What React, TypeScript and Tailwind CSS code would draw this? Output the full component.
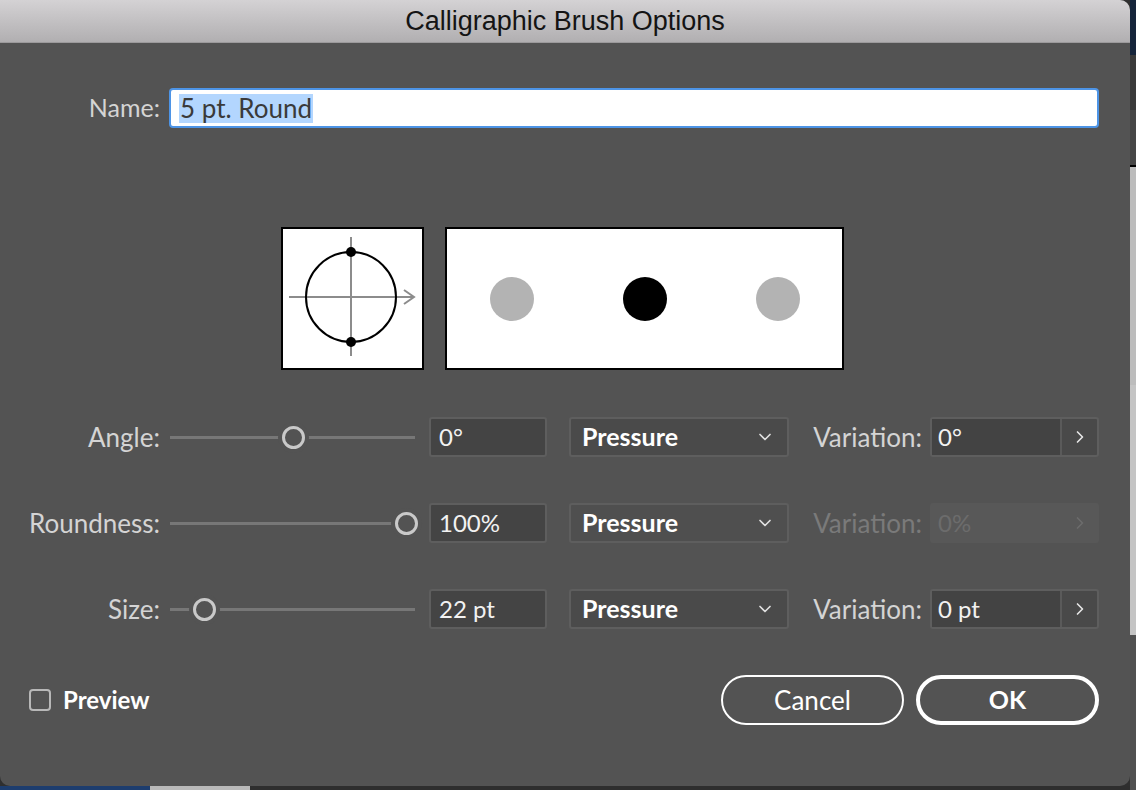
import { ChevronDown, ChevronRight } from 'lucide-react';

const rows = [
  { label: 'Angle:', thumb: 123, value: '0°', variation: '0°', disabled: false, dropBg: 'bg-[#4a4a4a]' },
  { label: 'Roundness:', thumb: 236, value: '100%', variation: '0%', disabled: true, dropBg: 'bg-[#4f4f4f]' },
  { label: 'Size:', thumb: 34, value: '22 pt', variation: '0 pt', disabled: false, dropBg: 'bg-[#4a4a4a]' },
];

function Slider({ thumb }: { thumb: number }) {
  return (
    <div className="relative ml-[10px] flex h-[40px] w-[247px] items-center">
      <div className="h-[3px] w-[245px] bg-[#777777]" />
      <div
        className="absolute top-[9px] h-[23px] w-[23px] rounded-full border-[3px] border-[#c9c9c9] bg-[#535353] shadow-[0_0_0_4px_#535353]"
        style={{ left: thumb - 11 }}
      />
    </div>
  );
}

function BrushTip() {
  return (
    <div className="h-[143px] w-[143px] border-2 border-black bg-white">
      <svg width="139" height="139" viewBox="0 0 139 139">
        <g stroke="#8c8c8c" strokeWidth="2" fill="none">
          <line x1="6" y1="68" x2="131" y2="68" />
          <polyline points="121,61 131,68 121,75" />
          <line x1="68" y1="8" x2="68" y2="127" />
        </g>
        <circle cx="68" cy="68" r="45" stroke="#000" strokeWidth="2" fill="none" />
        <circle cx="68" cy="23" r="5" fill="#000" />
        <circle cx="68" cy="113" r="5" fill="#000" />
      </svg>
    </div>
  );
}

export default function App() {
  return (
    <div className="flex h-[790px] w-[1136px] overflow-hidden bg-[#2f2f2f] font-['Lato',sans-serif]">
      <div className="flex w-[1130px] flex-col">
        <div className="flex h-[786px] flex-col overflow-hidden rounded-tr-[10px] rounded-b-[10px] bg-[#535353]">
          {/* Title bar */}
          <div className="flex h-[43px] items-center justify-center border-b border-[#9c9a9c] bg-linear-to-b from-[#d4d2d4] to-[#b1afb1] font-['Liberation_Sans',sans-serif] text-[27px] text-[#141414]">
            Calligraphic Brush Options
          </div>

          {/* Name */}
          <div className="mt-[45px] flex h-[40px] items-center">
            <div className="w-[160px] text-right text-[25px] text-[#d4d4d4]">Name:</div>
            <div className="ml-[9px] flex h-[40px] w-[930px] items-center rounded-[4px] border-2 border-[#4d94e6] bg-white pl-[8px] text-[26px] text-[#3a3a3a]">
              <span className="bg-[#b3d6fe] px-[1px] leading-[29px]">5 pt. Round</span>
            </div>
          </div>

          {/* Preview */}
          <div className="mt-[99px] ml-[281px] flex gap-[21px]">
            <BrushTip />
            <div className="flex h-[143px] w-[399px] items-center justify-center gap-[89px] border-2 border-black bg-white">
              <div className="h-[44px] w-[44px] rounded-full bg-[#b3b3b3]" />
              <div className="h-[44px] w-[44px] rounded-full bg-black" />
              <div className="h-[44px] w-[44px] rounded-full bg-[#b3b3b3]" />
            </div>
          </div>

          {/* Controls */}
          <div className="mt-[47px] flex flex-col gap-[46px]">
            {rows.map((r) => (
              <div key={r.label} className="flex h-[40px] items-center text-[24px]">
                <div className="w-[160px] text-right text-[26px] text-[#d4d4d4]">{r.label}</div>
                <Slider thumb={r.thumb} />
                <div className="ml-[12px] flex h-[40px] w-[118px] items-center rounded-[3px] border-2 border-[#5e5e5e] bg-[#444444] pl-[8px] text-[#f2f2f2]">
                  {r.value}
                </div>
                <div
                  className={`ml-[22px] flex h-[40px] w-[220px] items-center justify-between rounded-[3px] border-2 border-[#5e5e5e] ${r.dropBg} pl-[11px] pr-[12px] text-[25px] font-bold text-white`}
                >
                  Pressure
                  <ChevronDown size={20} strokeWidth={2} className="text-[#e0e0e0]" />
                </div>
                <div className={`w-[133px] text-right text-[26px] ${r.disabled ? 'text-[#7a7a7a]' : 'text-[#d4d4d4]'}`}>
                  Variation:
                </div>
                {r.disabled ? (
                  <div className="ml-[8px] flex h-[40px] w-[169px] items-center rounded-[3px] bg-[#585858] pl-[8px] text-[#6c6c6c]">
                    <span className="flex-1">{r.variation}</span>
                    <ChevronRight size={20} strokeWidth={2} className="mr-[9px] text-[#6c6c6c]" />
                  </div>
                ) : (
                  <div className="ml-[8px] flex h-[40px] w-[169px] rounded-[3px] border-2 border-[#5e5e5e] bg-[#494949]">
                    <div className="flex w-[130px] items-center border-r-2 border-[#5a5a5a] bg-[#434343] pl-[6px] text-[#f2f2f2]">
                      {r.variation}
                    </div>
                    <div className="flex flex-1 items-center justify-center">
                      <ChevronRight size={20} strokeWidth={2} className="text-[#e6e6e6]" />
                    </div>
                  </div>
                )}
              </div>
            ))}
          </div>

          {/* Footer */}
          <div className="mt-[46px] flex h-[50px] items-center pr-[31px] pl-[29px] text-[24px] text-white">
            <div className="h-[22px] w-[22px] rounded-[4px] border-2 border-[#b8b8b8]" />
            <span className="ml-[12px] font-bold">Preview</span>
            <div className="ml-auto flex gap-[12px]">
              <div className="flex h-[50px] w-[183px] items-center justify-center rounded-full border-2 border-white text-[26px]">
                Cancel
              </div>
              <div className="flex h-[50px] w-[183px] items-center justify-center rounded-full border-4 border-white text-[25px] font-bold">
                OK
              </div>
            </div>
          </div>
        </div>

        {/* Desktop behind the dialog */}
        <div className="flex flex-1">
          <div className="w-[150px] bg-[#1d3d6e]" />
          <div className="w-[100px] bg-[#b9b9b9]" />
          <div className="flex-1 bg-[#2e2e2e]" />
        </div>
      </div>

      <div className="flex flex-1 flex-col">
        <div className="h-[55px] bg-[#15243a]" />
        <div className="h-[55px] bg-[#3a3a3a]" />
        <div className="h-[55px] bg-[#464646]" />
        <div className="h-[220px] border-t-2 border-black bg-[#bcbcbc]" />
        <div className="h-[250px] bg-[#c4c4c4]" />
        <div className="flex-1 bg-[#505050]" />
      </div>
    </div>
  );
}
